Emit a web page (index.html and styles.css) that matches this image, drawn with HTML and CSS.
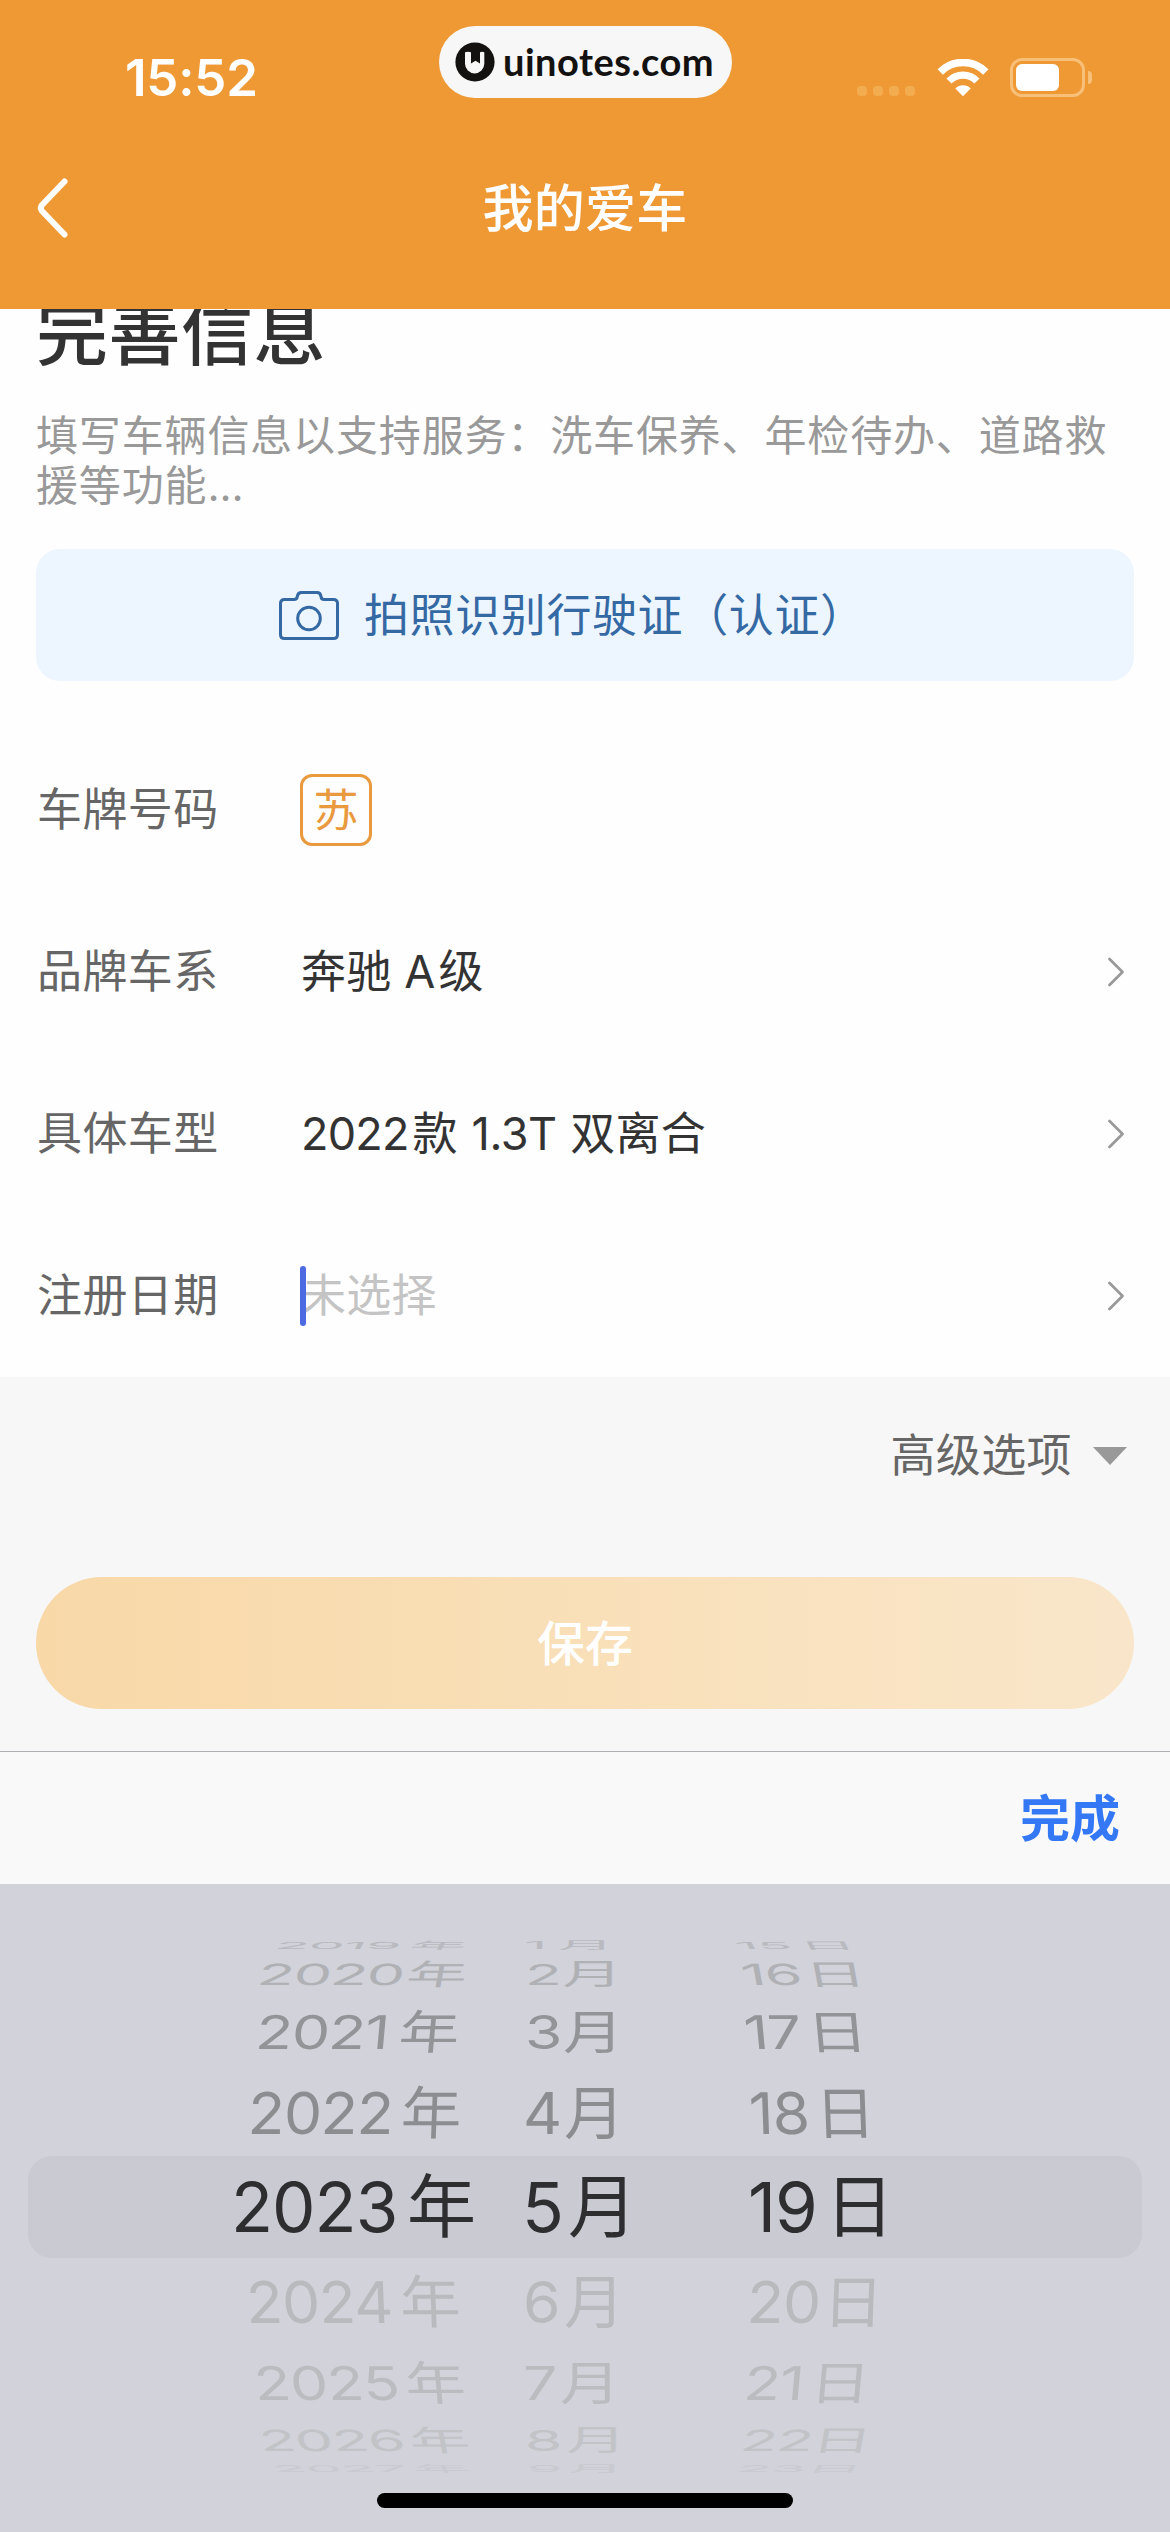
FILE: index.html
```html
<!DOCTYPE html>
<html lang="zh-CN">
<head>
<meta charset="utf-8">
<title>我的爱车</title>
<link rel="stylesheet" href="styles.css">
</head>
<body>
<header class="header">
  <div class="status">
    <span class="time">15:52</span>
    <div class="site">
      <svg class="site-logo" width="40" height="40" viewBox="0 0 40 40"><circle cx="20" cy="20" r="19.600" fill="#141211"/><path d="M10 10.300Q13 9 16 10.300V21.500L20.500 18.700L25 21.500V10.300Q27 9.400 29.300 10.300V21.800A9.650 9.650 0 0 1 10 21.800Z" fill="#f7f7f7"/></svg>
      <span class="site-name">uinotes.com</span>
    </div>
    <div class="indicators">
      <div class="dots"><i></i><i></i><i></i><i></i></div>
      <svg class="wifi" width="52" height="38" viewBox="0 0 52 38" fill="none"><path d="M3.200 13A32 32 0 0 1 48.800 13" stroke="#fff" stroke-width="7.600"/><path d="M12 22A19.500 19.500 0 0 1 40 22" stroke="#fff" stroke-width="7.200"/><path d="M18.300 29.400A11 11 0 0 1 33.700 29.400L26 37.300Z" fill="#fff"/></svg>
      <div class="battery"><div class="battery-body"><div class="battery-level"></div></div><div class="battery-tip"></div></div>
    </div>
  </div>
  <nav class="nav">
    <svg class="back" width="32" height="60" viewBox="0 0 32 60" fill="none"><path d="M27.500 3.500L5 27Q2.500 30 5 33L27.500 56.500" stroke="#fff" stroke-width="6" stroke-linecap="round" stroke-linejoin="round"/></svg>
    <h1 class="nav-title">我的爱车</h1>
  </nav>
</header>
<main class="content">
  <section class="intro">
    <h2 class="intro-title">完善信息</h2>
    <p class="intro-text">填写车辆信息以支持服务：洗车保养、年检待办、道路救<br>援等功能<span class="ellipsis">...</span></p>
    <button class="scan">
      <svg class="camera" width="60" height="49" viewBox="0 0 60 49" fill="none" stroke="#3569a4" stroke-width="3"><path d="M5.500 8.500H15Q18 8.500 18.300 5.500Q18.800 1.500 22.500 1.500H38Q41.500 1.500 42 5.500Q42.300 8.500 45 8.500H54.500Q58.500 8.500 58.500 12.500V43.500Q58.500 47.500 54.500 47.500H5.500Q1.500 47.500 1.500 43.500V12.500Q1.500 8.500 5.500 8.500Z"/><circle cx="30" cy="27.500" r="11.300"/></svg>
      <span>拍照识别行驶证（认证）</span>
    </button>
  </section>
  <section class="form">
    <div class="field"><span class="label">车牌号码</span><span class="plate">苏</span></div>
    <div class="field"><span class="label">品牌车系</span><span class="value">奔驰 <span class="latin">A</span>级</span><svg class="arrow" width="18" height="30" viewBox="0 0 18 30"><path d="M2.500 2L15.500 15L2.500 28" /></svg></div>
    <div class="field"><span class="label">具体车型</span><span class="value"><span class="latin">2022</span>款 <span class="latin tight">1.3T</span> 双离合</span><svg class="arrow" width="18" height="30" viewBox="0 0 18 30"><path d="M2.500 2L15.500 15L2.500 28" /></svg></div>
    <div class="field"><span class="label">注册日期</span><span class="value placeholder">未选择<i class="caret"></i></span><svg class="arrow" width="18" height="30" viewBox="0 0 18 30"><path d="M2.500 2L15.500 15L2.500 28" /></svg></div>
  </section>
  <section class="actions">
    <div class="advanced"><span>高级选项</span><i class="triangle"></i></div>
    <button class="save">保存</button>
  </section>
</main>
<div class="toolbar"><button class="done">完成</button></div>
<div class="picker">
  <div class="wheel">
    <div class="row up4"><b class="y">2019</b><b class="y">年</b><b>1</b><b>月</b><b class="d">15</b><b class="d">日</b></div>
    <div class="row up3"><b class="y">2020</b><b class="y">年</b><b>2</b><b>月</b><b class="d">16</b><b class="d">日</b></div>
    <div class="row up2"><b class="y">2021</b><b class="y">年</b><b>3</b><b>月</b><b class="d">17</b><b class="d">日</b></div>
    <div class="row up1"><b class="y">2022</b><b class="y">年</b><b>4</b><b>月</b><b class="d">18</b><b class="d">日</b></div>
    <div class="row current"><b>2023</b><b>年</b><b>5</b><b>月</b><b>19</b><b>日</b></div>
    <div class="row down1"><b class="y">2024</b><b class="y">年</b><b>6</b><b>月</b><b class="d">20</b><b class="d">日</b></div>
    <div class="row down2"><b class="y">2025</b><b class="y">年</b><b>7</b><b>月</b><b class="d">21</b><b class="d">日</b></div>
    <div class="row down3"><b class="y">2026</b><b class="y">年</b><b>8</b><b>月</b><b class="d">22</b><b class="d">日</b></div>
    <div class="row down4"><b class="y">2027</b><b class="y">年</b><b>9</b><b>月</b><b class="d">23</b><b class="d">日</b></div>
  </div>
  <div class="home-bar"></div>
</div>
</body>
</html>
```
FILE: styles.css
```css
* { box-sizing: border-box; margin: 0; padding: 0; }

body {
  display: flex;
  flex-direction: column;
  width: 1170px;
  height: 2532px;
  overflow: hidden;
  background: #fefefe;
  font-family: Inter, "Noto Sans CJK SC", sans-serif;
}

button { border: 0; font-family: inherit; }
svg { display: block; flex: none; }

/* Header */
.header { height: 309px; flex: none; background: #ef9935; color: #fff; }
.status { position: relative; display: flex; height: 150px; padding: 0 78px 0 125px; }
.time { margin-top: 48px; font-size: 51px; line-height: 60px; font-weight: 600; letter-spacing: -0.200px; }
.site {
  position: absolute;
  left: 439px;
  top: 26px;
  display: flex;
  align-items: center;
  width: 293px;
  height: 72px;
  padding-left: 16px;
  border-radius: 36px;
  background: #f7f7f7;
}
.site-name { margin: -3px 0 0 8px; color: #141211; font: 700 38px/44px Lato, sans-serif; letter-spacing: 0.5px; }
.indicators { display: flex; margin-left: auto; }
.dots { display: flex; gap: 6px; margin: 86px 22px 0 0; }
.dots i { width: 10px; height: 10px; border-radius: 4px; background: #f3ac4f; }
.wifi { margin: 59px 21px 0 0; }
.battery { display: flex; align-items: center; gap: 3px; height: 39px; margin-top: 58px; }
.battery-body { width: 75px; height: 39px; padding: 3px; border: 3px solid #f8bf78; border-radius: 12px; }
.battery-level { width: 43px; height: 27px; border-radius: 6px; background: #fff; }
.battery-tip { width: 4px; height: 13px; border-radius: 0 6px 6px 0; background: #f8bf78; }
.nav { position: relative; display: flex; align-items: center; justify-content: center; height: 116px; }
.back { position: absolute; left: 37px; top: 28px; }
.nav-title { padding-top: 2px; font-size: 51px; line-height: 60px; font-weight: 500; letter-spacing: 0.3px; }

/* Content */
.content { height: 1442px; flex: none; overflow: hidden; }
.intro { display: flow-root; height: 420px; padding: 0 36px; }
.intro-title { margin-top: -26px; color: #333; font-size: 72px; line-height: 100px; font-weight: 500; letter-spacing: 0.5px; }
.intro-text { margin-top: 28px; color: #999; font-size: 42px; line-height: 50px; letter-spacing: 0.85px; white-space: nowrap; }
.ellipsis { letter-spacing: 0; }
.scan {
  display: flex;
  align-items: center;
  width: 1098px;
  height: 132px;
  margin-top: 38px;
  padding-left: 243px;
  gap: 25px;
  border-radius: 24px;
  background: #edf6fe;
  color: #3569a4;
  font-size: 45px;
  line-height: 60px;
  letter-spacing: 0.6px;
}
.scan span { margin-top: 2px; }
.form { height: 648px; }
.field { display: flex; align-items: center; height: 162px; padding: 0 45px 0 37px; font-size: 45px; line-height: 62px; }
.label { width: 263px; color: #666; letter-spacing: 0.4px; }
.value { position: relative; padding-left: 1px; color: #333; letter-spacing: 0.2px; }
.latin { margin-right: 4px; letter-spacing: -0.8px; }
.tight { margin: 0 1px 0 1px; letter-spacing: -0.5px; }
.placeholder { color: #c4c4c4; }
.caret { position: absolute; left: 0; top: 1px; width: 6px; height: 60px; border-radius: 3px; background: #4c6ae2; }
.plate {
  display: flex;
  justify-content: center;
  width: 72px;
  height: 72px;
  padding-top: 3px;
  border: 3px solid #ea9a3e;
  border-radius: 12px;
  color: #ea9a3e;
}
.arrow { margin-left: auto; fill: none; stroke: #999; stroke-width: 2.800; stroke-linecap: round; stroke-linejoin: round; }
.actions { height: 374px; padding: 0 36px; background: #f7f7f7; }
.advanced { display: flex; align-items: center; justify-content: flex-end; height: 158px; padding-right: 7px; color: #666; font-size: 45px; line-height: 60px; letter-spacing: 0.4px; }
.triangle { margin-left: 21px; border: 17px solid transparent; border-top: 18px solid #999; border-bottom: 0; }
.save {
  width: 1098px;
  height: 132px;
  margin-top: 42px;
  border-radius: 66px;
  background: linear-gradient(90deg, #f8d8a7, #f9e1bc 60%, #f9e6ca);
  color: #fff;
  font-size: 48px;
  line-height: 134px;
  font-weight: 500;
}

/* Date picker */
.toolbar { display: flex; align-items: center; justify-content: flex-end; flex: none; height: 133px; padding-right: 50px; border-top: 1px solid #b0aeb2; background: #f9f9f9; }
.done { padding-top: 2px; background: none; color: #3478f6; font-size: 50px; line-height: 60px; font-weight: 600; }
.picker { height: 648px; flex: none; padding-top: 53px; background: #d1d2da; }
.wheel { height: 556px; }
.row {
  --scale: 1;
  --lean: 0deg;
  display: grid;
  height: var(--h);
  padding-left: 235px;
  grid-template-columns: 174px 117px 50px 176px 87px 80px;
  font-size: 60.500px;
  line-height: var(--h);
  letter-spacing: -1px;
  white-space: nowrap;
}
.row b { font-weight: 400; transform-origin: 0 50%; transform: scaleY(var(--scale)); }
.row .y { transform: scaleY(var(--scale)) skewX(calc(var(--lean) * -1)); }
.row .d { transform: scaleY(var(--scale)) skewX(var(--lean)); }
.up4 { --h: 18px; --scale: 0.170; --lean: 5deg; padding-left: 275px; grid-template-columns: 135px 114px 33px 178px 64px 60px; color: #b9babf; font-size: 57px; }
.up3 { --h: 39px; --scale: 0.480; --lean: 5deg; padding-left: 258px; grid-template-columns: 149px 118px 37px 179px 64px 60px; color: #b0b1b5; }
.up2 { --h: 77px; --scale: 0.770; --lean: 4deg; padding-left: 256px; grid-template-columns: 143px 126px 38px 181px 63px 60px; color: #939498; }
.up1 { --h: 85px; --scale: 0.950; --lean: 2deg; padding-left: 248px; grid-template-columns: 153px 122px 41px 185px 66px 60px; color: #8c8d90; }
.current { --h: 102px; margin: 0 28px; padding-left: 203px; grid-template-columns: 176px 115px 46px 180px 77px 80px; border-radius: 24px; background: #c9cad2; color: #2e2e30; font-size: 69px; }
.down1 { --h: 88px; --scale: 0.950; --lean: -2deg; padding-left: 246px; grid-template-columns: 154px 123px 41px 183px 76px 60px; color: #b9babd; }
.down2 { --h: 74px; --scale: 0.770; --lean: -4deg; padding-left: 254px; grid-template-columns: 151px 118px 37px 184px 66px 60px; color: #bbbcc0; }
.down3 { --h: 41px; --scale: 0.480; --lean: -5deg; padding-left: 259px; grid-template-columns: 150px 116px 41px 175px 71px 60px; color: #c2c3c7; }
.down4 { --h: 15px; --scale: 0.160; --lean: -5deg; padding-left: 272px; grid-template-columns: 141px 114px 40px 170px 69px 60px; color: #c9cad0; font-size: 57px; }
.home-bar { width: 416px; height: 15px; margin-left: 377px; border-radius: 8px; background: #000; }
```
